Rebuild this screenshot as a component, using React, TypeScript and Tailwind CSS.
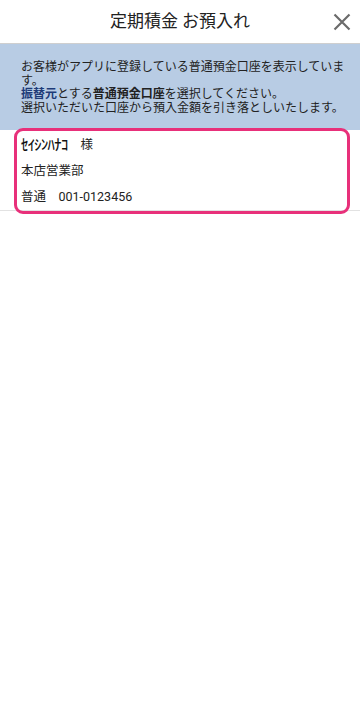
import React from "react";

export default function App() {
  return (
    <div
      className="min-h-[714px] w-[360px] bg-white text-[#222]"
      style={{ fontFamily: '"Roboto", "Noto Sans CJK JP", sans-serif' }}
    >
      <header className="relative flex h-[44px] items-center justify-center border-b border-[#cfcfcf]">
        <h1 className="text-[17px] font-normal leading-none text-[#222]">定期積金 お預入れ</h1>
        <button className="absolute right-[9px] top-[13px] flex h-[18px] w-[18px] items-center justify-center">
          <svg width="18" height="18" viewBox="0 0 18 18" fill="none">
            <path d="M1.5 1.5 L16.5 16.5 M16.5 1.5 L1.5 16.5" stroke="#6b6b6b" strokeWidth="2.2" strokeLinecap="butt" />
          </svg>
        </button>
      </header>

      <section className="bg-[#b8cce4] pl-[21px] pr-[12px] pt-[17px] pb-[15px] text-[12px] leading-[13.6px] text-[#222]">
        <p>お客様がアプリに登録している普通預金口座を表示しています。</p>
        <p>
          <span className="font-bold text-[#1d3b78]">振替元</span>とする
          <span className="font-bold">普通預金口座</span>を選択してください。
        </p>
        <p>選択いただいた口座から預入金額を引き落としいたします。</p>
      </section>

      <div className="relative border-b border-[#e2e2e2]">
        <div className="pl-[21px] pt-[2px] text-[12.5px] text-[#222]">
          <div className="flex h-[26px] items-center">
            <span className="text-[14.5px] font-medium tracking-[-0.6px] text-[#111]">ｾｲｼﾝﾊﾅｺ</span>
            <span className="ml-[13px]">様</span>
          </div>
          <div className="flex h-[26px] items-center">本店営業部</div>
          <div className="flex h-[26px] items-center">普通　001-0123456</div>
        </div>
        <div className="pointer-events-none absolute left-[14px] right-[10px] top-[-2px] bottom-[-4px] rounded-[9px] border-[3px] border-[#e8307a]" />
      </div>
    </div>
  );
}
